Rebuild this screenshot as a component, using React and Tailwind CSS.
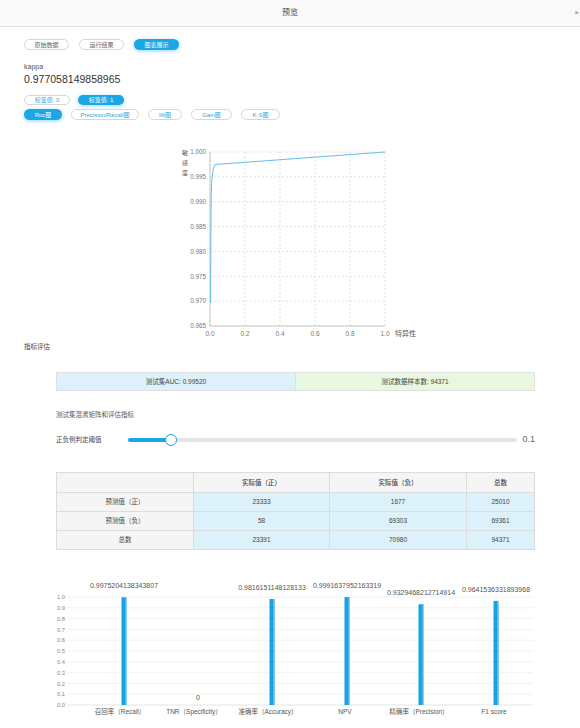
import React from "react";

const Pill = ({ active, children, w, muted }) => (
  <div
    className={`h-full rounded-full flex items-center justify-center text-[6px] leading-none ${
      active
        ? "bg-[#1ba6e6] text-white shadow-[0_1px_4px_rgba(27,166,230,0.45)]"
        : `bg-white border border-[#d6d6d6] ${muted ? "text-[#666]" : "text-[#2fa6e0]"}`
    }`}
    style={{ width: w }}
  >
    {children}
  </div>
);

const RocChart = () => {
  const yTicks = ["1.000", "0.995", "0.990", "0.985", "0.980", "0.975", "0.970", "0.965"];
  const xTicks = ["0.0", "0.2", "0.4", "0.6", "0.8", "1.0"];
  const x0 = 210, x1 = 385, y0 = 152, y1 = 326;
  const step = (y1 - y0) / 7;
  const xs = (x1 - x0) / 5;
  return (
    <svg width="580" height="220" viewBox="0 120 580 220" className="block">
      {yTicks.map((t, i) => (
        <g key={t}>
          <line x1={x0} x2={x1} y1={y0 + i * step} y2={y0 + i * step} stroke="#d4d4d4" strokeWidth="0.7" strokeDasharray="2 2" />
          <text x={x0 - 4} y={y0 + i * step + 2.3} fontSize="6.3" fill="#777" textAnchor="end">{t}</text>
        </g>
      ))}
      {xTicks.map((t, i) => (
        <g key={t}>
          <line x1={x0 + i * xs} x2={x0 + i * xs} y1={y0} y2={y1} stroke="#d4d4d4" strokeWidth="0.7" strokeDasharray="2 2" />
          <text x={x0 + i * xs} y={y1 + 10} fontSize="6.5" fill="#777" textAnchor="middle">{t}</text>
        </g>
      ))}
      <line x1={x0} x2={x0} y1={y0} y2={y1} stroke="#bbb" strokeWidth="0.8" />
      <line x1={x0} x2={x1} y1={y1} y2={y1} stroke="#bbb" strokeWidth="0.8" />
      <text x="185" y="155" fontSize="6" fill="#555" textAnchor="middle">敏</text>
      <text x="185" y="165" fontSize="6" fill="#555" textAnchor="middle">感</text>
      <text x="185" y="175" fontSize="6" fill="#555" textAnchor="middle">度</text>
      <text x="395" y="336" fontSize="7" fill="#555">特异性</text>
      <path
        d="M210.6 303 L211 210 L211.4 188 Q212 170 215 164.5 L385 152"
        fill="none"
        stroke="#66bde9"
        strokeWidth="1"
      />
    </svg>
  );
};

const BarChart = () => {
  const top = 595, bottom = 703;
  const h = bottom - top;
  const bars = [
    { v: 0.9975204138343807, label: "0.9975204138343807", cx: 124, name: "召回率（Recall）", nx: 120 },
    { v: 0, label: "0", cx: 198, name: "TNR（Specificity）", nx: 194 },
    { v: 0.9816151148128133, label: "0.9816151148128133", cx: 272, name: "准确率（Accuracy）", nx: 268 },
    { v: 0.9991637952163319, label: "0.9991637952163319", cx: 347, name: "NPV", nx: 345 },
    { v: 0.9329468212714914, label: "0.9329468212714914", cx: 421, name: "精确率（Precision）", nx: 419 },
    { v: 0.9641536331893968, label: "0.9641536331893968", cx: 496, name: "F1 score", nx: 494 },
  ];
  return (
    <svg width="580" height="180" viewBox="0 548 580 180" className="block">
      {Array.from({ length: 11 }).map((_, i) => {
        const y = bottom - i * (h / 10);
        return (
          <g key={i}>
            <line x1="67" x2="533" y1={y} y2={y} stroke={i === 0 ? "#ddd" : "#efefef"} strokeWidth="0.8" />
            <text x="65" y={y + 2.2} fontSize="5.8" fill="#888" textAnchor="end">{(i / 10).toFixed(1)}</text>
          </g>
        );
      })}
      {bars.map((b) => {
        const bt = bottom - b.v * h;
        return (
          <g key={b.name}>
            {b.v > 0 && (
              <>
                <rect x={b.cx - 2.5} y={bt} width="5" height={bottom - bt} fill="#1aa3e4" />
                <rect x={b.cx + 1.5} y={bt} width="1" height={bottom - bt} fill="#7ccff3" />
              </>
            )}
            <text x={b.cx} y={b.v > 0 ? bt - 9 : 698} fontSize="7" fill="#555" textAnchor="middle">{b.label}</text>
            <text x={b.nx} y="712" fontSize="6.5" fill="#555" textAnchor="middle">{b.name}</text>
          </g>
        );
      })}
    </svg>
  );
};

export default function App() {
  const rows = [
    ["预测值（正）", "23333", "1677", "25010"],
    ["预测值（负）", "58", "69303", "69361"],
    ["总数", "23391", "70980", "94371"],
  ];
  return (
    <div className="w-[580px] h-[728px] overflow-hidden bg-white text-[#333] font-['Liberation_Sans','Noto_Sans_CJK_SC',sans-serif]">
      {/* Header */}
      <div className="relative h-[27px] bg-[#fafafa] border-b border-[#e2e2e2] flex items-center justify-center">
        <span className="text-[8px] text-[#444]">预览</span>
        <span className="absolute right-[1px] top-[9px] text-[8px] leading-none text-[#777]">×</span>
      </div>

      <div className="px-[24px]">
        {/* Tabs */}
        <div className="mt-[12px] h-[11px] flex gap-[10px]">
          <Pill w={45} muted>原始数据</Pill>
          <Pill w={45} muted>运行结果</Pill>
          <Pill w={45} active>图表展示</Pill>
        </div>

        <div className="mt-[12px] h-[10px] flex items-center text-[7px] text-[#555]">kappa</div>
        <div className="mt-[1px] h-[14px] flex items-center text-[10.5px] text-[#333]">0.977058149858965</div>

        <div className="mt-[8px] h-[10px] flex gap-[8px]">
          <Pill w={46}>标签值: 0</Pill>
          <Pill w={46} active>标签值: 1</Pill>
        </div>
        <div className="mt-[4px] h-[11px] flex gap-[9px]">
          <Pill w={38} active>Roc图</Pill>
          <Pill w={68}>Precision/Recall图</Pill>
          <Pill w={34}>lift图</Pill>
          <Pill w={41}>Gain图</Pill>
          <Pill w={39}>K-S图</Pill>
        </div>
      </div>

      <RocChart />

      <div className="px-[24px] mt-[2px] h-[10px] flex items-center text-[6.5px] text-[#444]">指标评估</div>

      <div className="pl-[56px] pr-[45px]">
        {/* AUC */}
        <div className="mt-[20px] h-[19px] flex border border-[#e0e0e0] text-[6.5px] text-[#444]">
          <div className="flex-1 bg-[#dcf1f9] flex items-center justify-center border-r border-[#e0e0e0]">测试集AUC: 0.99520</div>
          <div className="flex-1 bg-[#e8f7df] flex items-center justify-center">测试数据样本数: 94371</div>
        </div>

        <div className="mt-[19px] h-[10px] flex items-center text-[6.5px] text-[#555]">测试集混淆矩阵和评估指标</div>

        {/* Slider */}
        <div className="mt-[12px] h-[16px] flex items-center">
          <span className="w-[72px] text-[6.5px] text-[#444]">正负例判定阈值</span>
          <div className="relative w-[389px] h-[4px] rounded-full bg-[#e4e4e4]">
            <div className="h-full w-[43px] rounded-full bg-[#1ba6e6]" />
            <div className="absolute left-[37px] top-[-4px] w-[12px] h-[12px] rounded-full bg-white border border-[#1ba6e6]" />
          </div>
          <span className="ml-auto text-[9px] text-[#666]">0.1</span>
        </div>

        {/* Confusion matrix */}
        <div className="mt-[24px] border border-[#dcdcdc] text-[6.5px] text-[#444]">
          <div className="grid grid-cols-[137px_136px_137px_1fr] h-[19px] bg-[#f5f5f5]">
            <div className="border-r border-[#dcdcdc]" />
            <div className="border-r border-[#dcdcdc] flex items-center justify-center font-medium">实际值（正）</div>
            <div className="border-r border-[#dcdcdc] flex items-center justify-center font-medium">实际值（负）</div>
            <div className="flex items-center justify-center font-medium">总数</div>
          </div>
          {rows.map((r) => (
            <div key={r[0]} className="grid grid-cols-[137px_136px_137px_1fr] h-[19px] border-t border-[#dcdcdc]">
              <div className="bg-[#f5f5f5] border-r border-[#dcdcdc] flex items-center justify-center">{r[0]}</div>
              <div className="bg-[#dcf1f9] border-r border-[#dcdcdc] flex items-center justify-center">{r[1]}</div>
              <div className="bg-[#dcf1f9] border-r border-[#dcdcdc] flex items-center justify-center">{r[2]}</div>
              <div className="bg-[#dcf1f9] flex items-center justify-center">{r[3]}</div>
            </div>
          ))}
        </div>
      </div>

      <BarChart />
    </div>
  );
}
